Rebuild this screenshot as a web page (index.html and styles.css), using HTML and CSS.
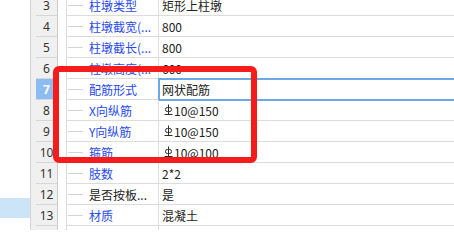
FILE: index.html
```html
<!DOCTYPE html>
<html lang="zh">
<head>
<meta charset="utf-8">
<link rel="stylesheet" href="styles.css">
</head>
<body>
<div class="app">
  <div class="left"><div class="left-sel"></div></div>
  <div class="splitter"></div>
  <div class="grid">
    <div class="row"><div class="hd">3</div><div class="sp"></div><div class="nm"><span class="tl"></span><span class="tx">柱墩类型</span></div><div class="val">矩形上柱墩</div></div>
    <div class="row"><div class="hd">4</div><div class="sp"></div><div class="nm"><span class="tl"></span><span class="tx">柱墩截宽(...</span></div><div class="val">800</div></div>
    <div class="row"><div class="hd">5</div><div class="sp"></div><div class="nm"><span class="tl"></span><span class="tx">柱墩截长(...</span></div><div class="val">800</div></div>
    <div class="row"><div class="hd">6</div><div class="sp"></div><div class="nm"><span class="tl"></span><span class="tx">柱墩高度(...</span></div><div class="val">600</div></div>
    <div class="row sel"><div class="hd">7</div><div class="sp"></div><div class="nm"><span class="tl"></span><span class="tx">配筋形式</span></div><div class="val">网状配筋</div></div>
    <div class="row"><div class="hd">8</div><div class="sp"></div><div class="nm"><span class="tl"></span><span class="tx">X向纵筋</span></div><div class="val"><svg class="rb" viewBox="0 0 9 12" width="9" height="12"><path d="M4.5 0.5V10.5M0.5 10.5H8.5"/><rect x="1.5" y="3.5" width="6" height="4" rx="1.8"/></svg>10@150</div></div>
    <div class="row"><div class="hd">9</div><div class="sp"></div><div class="nm"><span class="tl"></span><span class="tx">Y向纵筋</span></div><div class="val"><svg class="rb" viewBox="0 0 9 12" width="9" height="12"><path d="M4.5 0.5V10.5M0.5 10.5H8.5"/><rect x="1.5" y="3.5" width="6" height="4" rx="1.8"/></svg>10@150</div></div>
    <div class="row"><div class="hd">10</div><div class="sp"></div><div class="nm"><span class="tl"></span><span class="tx">箍筋</span></div><div class="val"><svg class="rb" viewBox="0 0 9 12" width="9" height="12"><path d="M4.5 0.5V10.5M0.5 10.5H8.5"/><rect x="1.5" y="3.5" width="6" height="4" rx="1.8"/></svg>10@100</div></div>
    <div class="row"><div class="hd">11</div><div class="sp"></div><div class="nm"><span class="tl"></span><span class="tx">肢数</span></div><div class="val">2*2</div></div>
    <div class="row"><div class="hd">12</div><div class="sp"></div><div class="nm"><span class="tl"></span><span class="tx dark">是否按板...</span></div><div class="val">是</div></div>
    <div class="row"><div class="hd">13</div><div class="sp"></div><div class="nm"><span class="tl"></span><span class="tx">材质</span></div><div class="val">混凝土</div></div>
    <div class="row"><div class="hd">14</div><div class="sp"></div><div class="nm"><span class="tl"></span><span class="tx">标高</span></div><div class="val">0</div></div>
  </div>
</div>
<div class="mark"></div>
</body>
</html>
```
FILE: styles.css
```css
html, body {
  margin: 0;
  padding: 0;
}
body {
  width: 454px;
  height: 230px;
  overflow: hidden;
  position: relative;
  background: #ffffff;
  font-family: "Noto Sans CJK SC", "Noto Sans", sans-serif;
  font-size: 12px;
}
.app {
  display: flex;
  height: 230px;
}
.left {
  width: 30px;
  flex: none;
}
.left-sel {
  margin-top: 198px;
  height: 20px;
  background: #cce4f7;
}
.splitter {
  width: 5px;
  flex: none;
  border-left: 1px solid #d2d2d2;
  background: #f0f0f0;
}
.grid {
  margin-top: -5px;
  width: 440px;
  flex: none;
}
.row {
  display: flex;
  height: 21px;
}
.hd {
  width: 22px;
  flex: none;
  box-sizing: border-box;
  border-right: 1px solid #c9c9c9;
  border-bottom: 1px solid #d6d6d6;
  background: #f0f0f0;
  color: #333;
  font-family: "Noto Sans", sans-serif;
  font-size: 12px;
  display: flex;
  align-items: center;
  justify-content: center;
}
.row.sel .hd {
  background: #8cbcf2;
  color: #ffffff;
  font-weight: bold;
}
.sp {
  width: 8px;
  flex: none;
}
.nm {
  width: 93px;
  flex: none;
  box-sizing: border-box;
  border-left: 1px solid #dcdcdc;
  border-right: 1px solid #dcdcdc;
  border-bottom: 1px solid #dcdcdc;
  display: flex;
  align-items: center;
  overflow: hidden;
  white-space: nowrap;
}
.tl {
  width: 15px;
  height: 1px;
  margin-left: 1px;
  margin-right: 6px;
  background: #d4d4d4;
  flex: none;
}
.tx {
  color: #2848f0;
}
.tx.dark {
  color: #222;
}
.val {
  flex: 1;
  border-bottom: 1px solid #dcdcdc;
  display: flex;
  align-items: center;
  padding-left: 3px;
  color: #222;
  white-space: nowrap;
}
.row.sel .val {
  outline: 2px solid #6ea8e4;
  outline-offset: -1px;
}
.rb {
  margin-left: 2px;
  margin-right: 1px;
  fill: none;
  stroke: #2a2a2a;
  stroke-width: 1;
}
.mark {
  position: absolute;
  left: 53px;
  top: 66px;
  width: 192px;
  height: 85px;
  border: 6px solid #f71c1c;
  border-radius: 6px;
}
```
